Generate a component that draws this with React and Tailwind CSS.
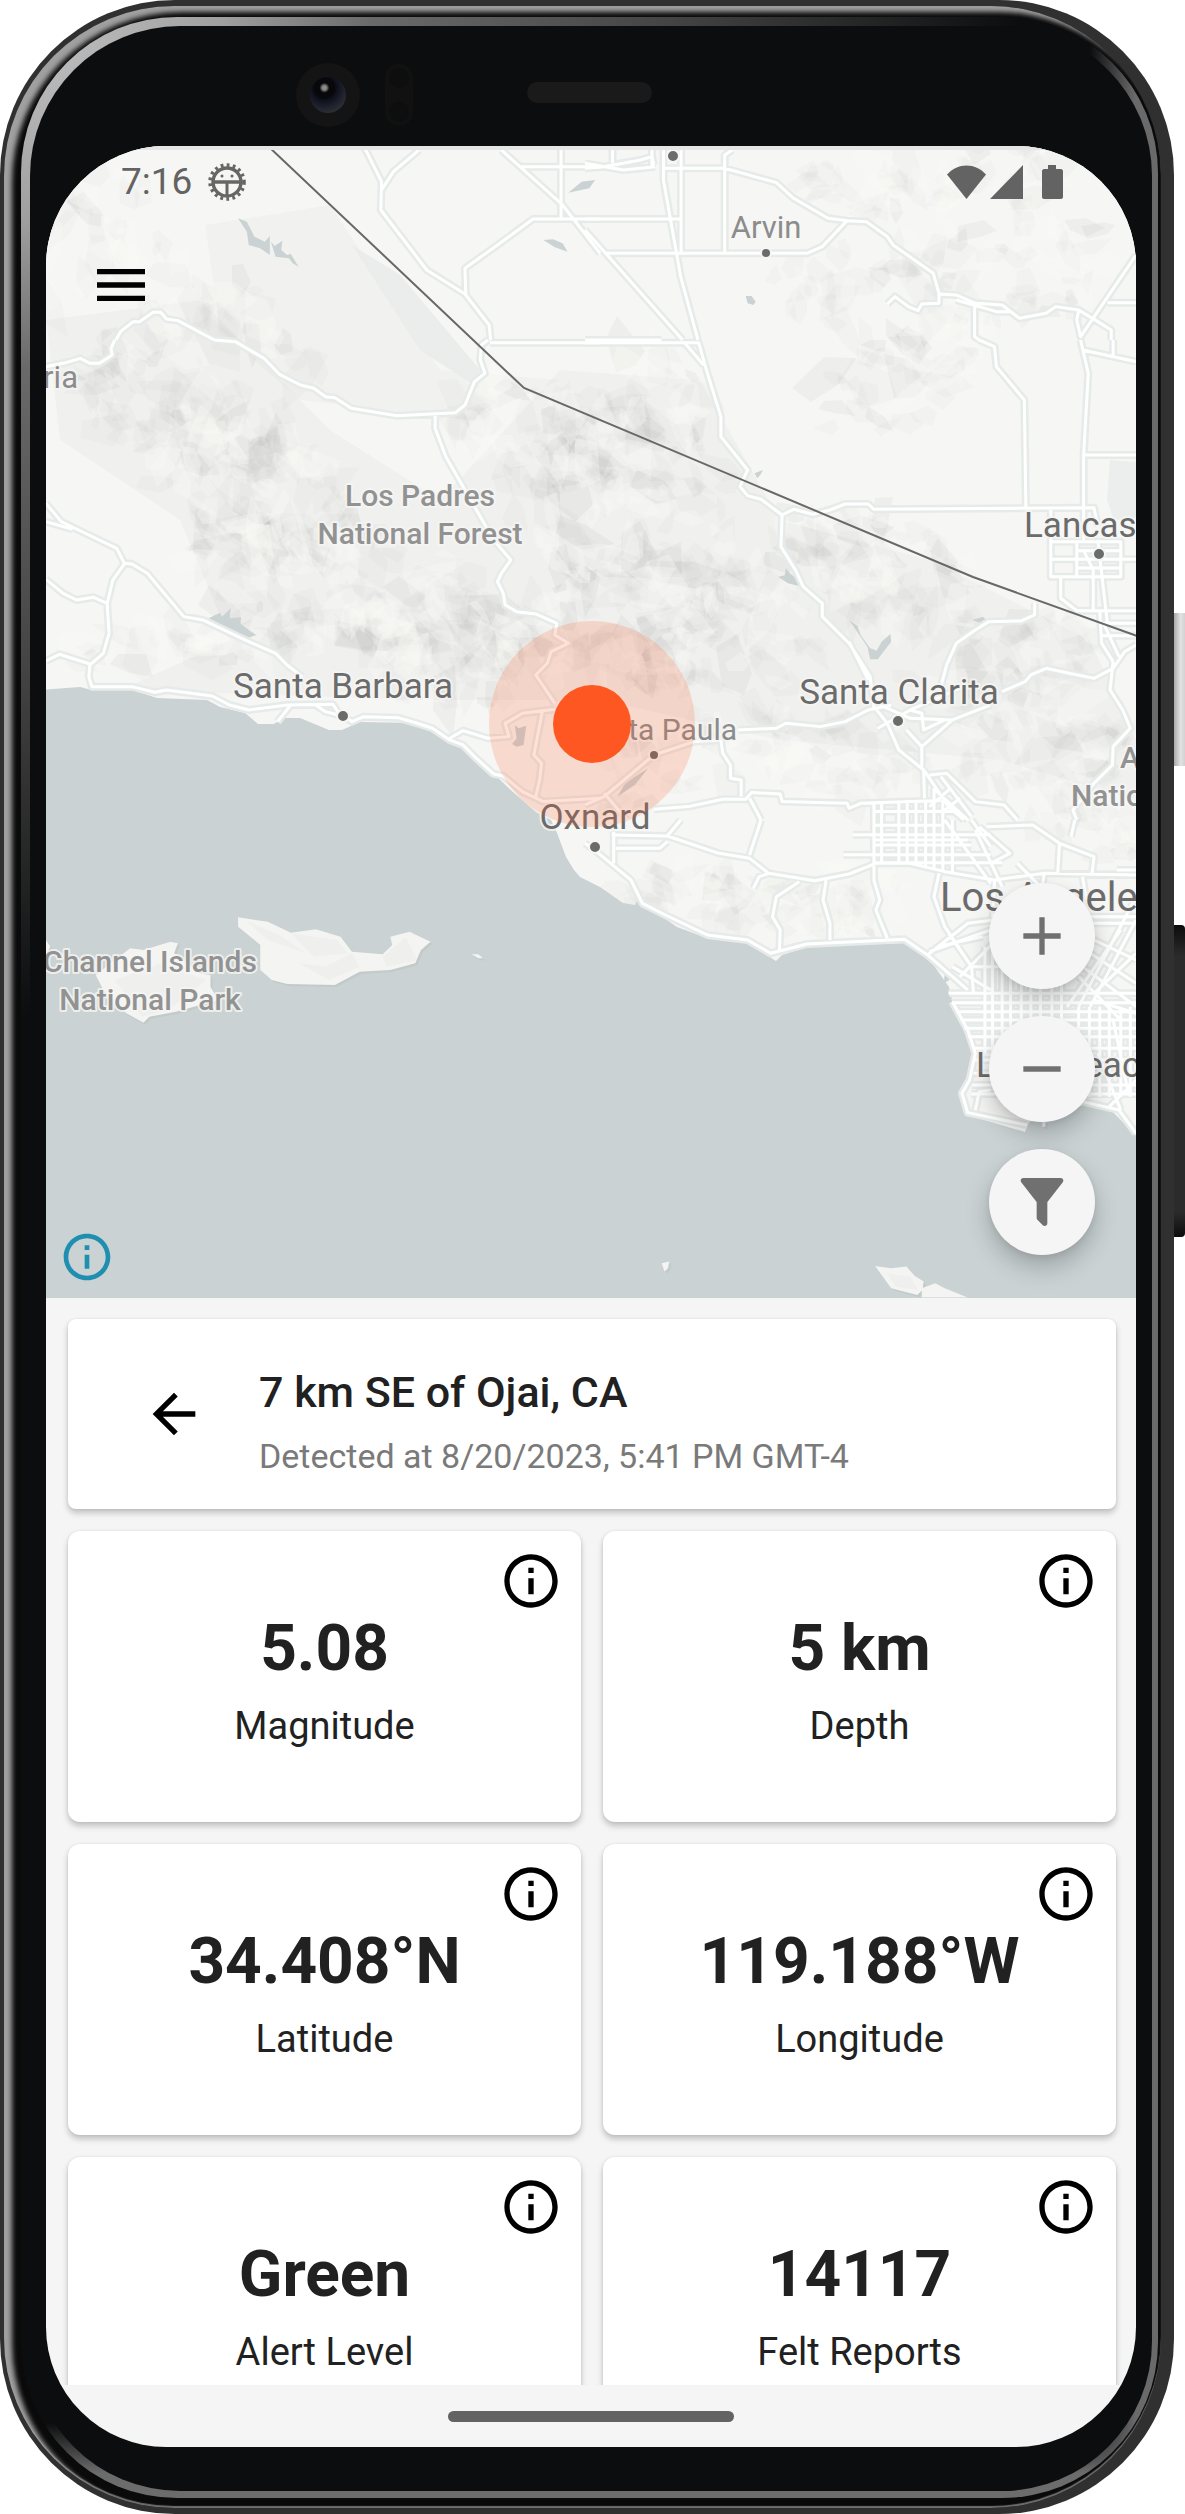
import React from 'react';
import { MdMenu, MdArrowBack, MdOutlineInfo } from 'react-icons/md';

/* ---------- map data ---------- */

const TILES = [
  {
    at: [0, 0],
    roads:
      'M950 440L960 460 997 545 995 630 1115 810 1215 882 1278 975 1282 1020M1095 450L1028 515 997 570M1310 450L1470 615 1568 760M1466 450V655M1360 500H1568M1568 657H1393L1300 735 1215 805 1217 885M303 1020L315 995 348 965 365 965 400 937 420 937 435 957 465 962 560 1020',
    lakes:
      'M622 655L645 665 665 710 692 725 705 708V765L680 745 650 735 645 695ZM708 725L718 738 738 722 735 750 750 765 760 762 780 800 765 790 755 775 720 770ZM1420 720L1445 718 1470 730 1483 755 1450 742ZM1485 578L1520 545 1555 540 1540 565Z',
  },
  {
    at: [585, 0],
    roads:
      'M0 505L50 500 145 480 175 470 180 495M0 490L100 510 183 500M175 450V500M72 450V490M205 450V540L250 830 295 1020M251 450V760M205 505H365L500 548 545 595 635 655 685 662 735 665 790 710 805 735 910 820 925 880 925 910 880 912 870 932 845 920 810 890 790 912M365 755V465L385 450M0 657H251M50 760H580L620 740 685 662M0 690L255 1020M925 882L970 885 1020 910 1090 915 1135 955 1205 940 1230 920 1290 930 1340 965 1375 990V1020M1440 765L1295 1010 1285 960 1290 930M1365 908H1440M1018 915V1010L1030 1020M970 900L1075 935 1115 935M0 1020H200',
    lakes: 'M420 888L435 888 446 905 440 915 425 910Z',
  },
  {
    at: [0, 340],
    roads:
      'M120 80L165 70 210 55 235 70 260 70 293 45 290 25 300 0M560 0L615 5 690 55 730 103 785 135 820 145 850 170 875 173 918 205 1037 227 1190 218 1215 195 1240 125 1267 100 1255 60 1258 15 1275 0M1280 8H1568M1137 227V265L1165 350 1290 600 1335 660 1310 700 1300 725 1315 760 1320 795 1350 815 1400 822 1455 850 1450 885 1485 910 1440 935 1430 970 1400 1005 1450 1090M120 490L160 545 205 570 305 625 325 670 345 672 385 700 480 830 530 840 640 900 720 940 750 975 790 1010M120 545L190 568M325 672L295 720 280 790 285 880 270 940 235 975 232 1010 240 1040H345L405 1057 435 1050 555 1068 600 1095 650 1110 750 1095 870 1093 885 1120 920 1145 950 1130 1040 1133 1090 1150 1130 1165 1175 1200 1210 1215 1240 1250 1290 1302 1315 1308 1365 1355 1420 1385 1568 1375M120 718L165 760 200 780 245 772 280 790M120 963L155 943 235 972M760 1095L725 1145M825 1095L850 1115 885 1125M1175 1195L1210 1172 1275 1195 1330 1190 1320 1150 1365 1120 1450 1108M1417 1115L1395 1245 1415 1270 1410 1320 1400 1370',
    lakes:
      'M545 835L575 818 580 830 603 805 600 835 630 832 628 850 650 870 670 885 650 893 590 865ZM1345 1155L1355 1165 1375 1157 1368 1215 1350 1220 1338 1212 1350 1195Z',
  },
  {
    at: [585, 340],
    roads:
      'M0 8H297L320 100 355 230 355 290 425 390 405 440 425 467 460 478 515 525 512 620 550 690 570 740 620 790 620 830 690 910 745 1010 755 1100 790 1150 820 1230 885 1290M260 8L310 75M690 905L740 1020M515 525L545 508 595 523 640 510 680 492 740 492 755 508 1330 503 1340 560M1030 0L1070 20 1075 80 1148 180 1152 500M1295 0L1315 100 1303 345 1303 600M1303 345H1440M1300 30L1440 65M1380 0V45M1217 510V710H1400V605H1217M1217 658H1440M1285 605V710M1285 632H1400M1285 684H1400M1340 600L1365 850M1243 710V775L1285 812H1440M1328 690V812M1345 812L1350 910 1380 965M1303 632L1328 690M1345 850H1440M1345 887H1440M1355 850L1395 950M1440 915L1410 935 1380 985 1330 1015 1265 1000 1205 985 1165 1005 1150 1025 1090 1055M1380 965L1372 1050 1405 1110 1425 1165 1380 1220 1378 1275 1330 1330 1275 1410 1285 1440M1175 790V825L1140 843 1055 845 1020 870 970 910 945 975 930 1040M400 1170L500 1165 525 1150 615 1160 680 1145 740 1110 800 1095M355 1200L360 1240 380 1275 380 1315 408 1320 408 1370M0 1395L50 1370 180 1245 285 1205 355 1200M50 1360L110 1440M180 1408L270 1400 360 1378 420 1378 435 1358 510 1362 515 1385 685 1390 690 1405 720 1390 930 1382M430 1375L460 1440M885 1290L887 1375M885 1290L950 1400 990 1440M900 1305L945 1300 1020 1385 1095 1395 1130 1440M840 1170L880 1220 880 1285M880 1220L960 1140 1060 1095M765 1165L850 1110 880 1120 885 1170 940 1140M770 1095L850 1135 960 1140M930 1310L1010 1430M910 1345L1000 1440M955 1345L900 1400M980 1375L930 1420M850 1110L990 1040M755 1385V1440M775 1385V1440M820 1385V1440M842 1385V1440M865 1385V1440M890 1385V1440M912 1345V1440M935 1380V1440M755 1415H980',
    lakes:
      'M690 840L712 858 720 885 745 925 762 932 775 905 798 882 800 905 780 935 765 958 745 958 738 920ZM505 710L522 706 525 685 535 700 552 715 560 738 530 730ZM443 400L465 390 458 405 450 415ZM1012 840L1040 830 1048 840 1035 850ZM85 1370L105 1330 165 1285 130 1335Z',
  },
  {
    at: [585, 820],
    roads:
      'M70 45L215 48 350 100 430 115 480 160 600 182 690 162 760 130 850 130 940 155 1070 180 1200 160 1440 165M430 105L460 0M215 48L250 0M75 35V130M80 85H195L215 65M0 70L30 95 120 180 150 250 210 285 320 345 425 360 485 400 580 372 835 358 895 405 1000 510M440 205L455 170 480 160M560 185L500 230 490 290 510 330 508 390M630 180L622 240 640 310 640 360M755 130V180L770 240 760 270 790 355M925 160L912 230 940 320 1010 440 1015 520M895 405L1000 310 1070 300M900 395L1060 330M920 380L1040 350M950 340L1010 440M960 545L1000 630 1020 700 1005 780 985 820 1000 878 1155 915M1440 940L1395 870 1300 845M1020 870L1030 815 1060 810M1050 20L1170 15 1240 70 1330 110 1325 160M1020 30L1090 200M1240 70L1235 165M1280 0L1270 50M940 0L1060 190M700 44H1060M675 104H1060M755 0V130M775 0V128M820 0V125M842 0V125M865 0V130M890 0V140M912 0V145M935 0V150M960 0V155M755 75H1010M755 128H1090M1060 130L1110 100 1030 20M1010 0L1060 80M1070 180L1065 300M1130 130L1190 200M1300 170L1310 240M755 16H930M755 60H1000M1200 160L1195 200M1390 150H1440',
    lakes: 'M940 455L955 462 952 480 938 490Z',
  },
];

const CITY_GRID = [
  ...[1045, 1065, 1090, 1112, 1140, 1165, 1190, 1220, 1245].map((x) => `M${x} 380V700`),
  ...[1290, 1318, 1345, 1370, 1400, 1425].map((x) => `M${x} 560V830`),
  ...[520, 548, 575, 600, 625, 650, 685, 720, 760, 795, 822].map((y) => `M950 ${y}H1440`),
  'M960 440L1060 510M980 470L1100 330M1010 440H1100M1290 560L1440 230M1320 560L1440 300M1330 520L1440 400M1260 560L1400 330M1320 290H1440M1320 310H1440M1330 360L1440 420M1320 400L1440 490M1300 440L1440 560M1290 470L1400 600M1380 600L1420 820M1340 700L1400 870M1330 540L1440 580M1370 860L1440 780',
].join('');

const ISLANDS = [
  {
    at: [0, 820],
    d: 'M622 292L700 305 760 338 825 328 890 350 920 395 1000 403 1025 375 1020 350 1070 335 1125 365 1100 390 1085 430 1020 450 940 455 875 495 750 492 710 480 680 450 680 375 622 320ZM340 385L375 390 445 365 465 370 455 400 520 460 550 465V500L570 540 460 575 390 590 375 608 330 580 270 510 250 465ZM120 360L132 380 120 400ZM1232 403H1250L1262 415H1250ZM1283 417H1293Z',
    shade: 'M640 300L730 345 800 400 700 360ZM760 340L880 360 910 400 820 410ZM780 430L850 440 920 400 940 440 860 480ZM1000 410L1060 350 1090 420 1010 440ZM300 480L420 430 540 480 440 570 370 590Z',
  },
  {
    at: [585, 820],
    d: 'M758 1338L800 1345 840 1340 862 1368 885 1385 882 1410 868 1425 800 1405ZM880 1405L915 1390 940 1405 1000 1433H880ZM200 1330L220 1325 217 1345 208 1355ZM1195 905H1203V920H1195Z',
    shade: 'M790 1360L850 1370 870 1410 810 1400Z',
  },
];

const SEA =
  'M40 690L80 687 92 690 132 690 157 698 207 700 220 707 245 713 258 724 274 724 283 718 300 718 329 730 342 730 360 722 415 723 440 733 459 745 497 777 513 792 536 812 551 820 557 833 566 857 574 870 580 877 600 887 623 903 635 905 639 898 648 907 677 927 707 938 748 943 776 961 782 955 807 947 905 943 928 957 949 987 954 1007 968 1033 974 1050 973 1077 962 1090 968 1115 1025 1132 1029 1122 1083 1105 1109 1108 1140 1140V1300H40Z';

// Mountain areas: centre, radii, tilt in degrees, number of facets.
const RANGES = [
  [90, 240, 70, 80, 40, 36],
  [230, 340, 110, 60, 40, 40],
  [160, 420, 110, 60, 35, 60],
  [250, 480, 130, 60, 35, 100],
  [340, 580, 160, 60, 15, 110],
  [200, 640, 130, 28, -5, 40],
  [450, 650, 110, 50, 10, 80],
  [540, 450, 100, 60, 30, 60],
  [620, 500, 120, 90, 20, 90],
  [640, 620, 130, 70, 10, 110],
  [740, 650, 80, 90, 20, 50],
  [650, 400, 70, 50, 20, 30],
  [880, 300, 110, 50, 10, 40],
  [900, 380, 100, 45, -20, 40],
  [1000, 230, 120, 90, 20, 80],
  [880, 190, 80, 30, 5, 24],
  [880, 570, 110, 50, 20, 80],
  [1000, 660, 100, 45, -15, 50],
  [820, 760, 120, 40, 5, 40],
  [1030, 740, 100, 60, 5, 60],
  [730, 900, 120, 34, 8, 44],
  [850, 900, 60, 34, 8, 20],
  [1090, 830, 60, 30, 10, 26],
  [640, 780, 60, 50, 10, 20],
];

function makeFacets() {
  let seed = 71;
  const rnd = () => {
    seed = (seed * 16807) % 2147483647;
    return seed / 2147483647;
  };
  const light = [];
  const mid = [];
  const dark = [];
  RANGES.forEach(([cx, cy, rx, ry, tilt, n]) => {
    const t = (tilt * Math.PI) / 180;
    for (let i = 0; i < n; i += 1) {
      const a = rnd() * Math.PI * 2;
      const r = Math.sqrt(rnd());
      const u = Math.cos(a) * r * rx;
      const v = Math.sin(a) * r * ry;
      const x = cx + u * Math.cos(t) - v * Math.sin(t);
      const y = cy + u * Math.sin(t) + v * Math.cos(t);
      const size = 7 + rnd() * 20;
      const turn = t + (rnd() - 0.3) * 2.4;
      const pts = [];
      for (let k = 0; k < 5; k += 1) {
        const b = (k / 5) * Math.PI * 2;
        const s = size * (0.4 + rnd() * 0.9);
        const px = Math.cos(b) * s * 1.3;
        const py = Math.sin(b) * s * 0.7;
        pts.push(
          `${Math.round(x + px * Math.cos(turn) - py * Math.sin(turn))} ${Math.round(
            y + px * Math.sin(turn) + py * Math.cos(turn),
          )}`,
        );
      }
      const d = `M${pts.join('L')}Z`;
      const pick = rnd();
      if (pick < 0.25) light.push(d);
      else if (pick < 0.9) mid.push(d);
      else dark.push(d);
    }
  });
  return { light, mid, dark };
}

const FACETS = makeFacets();

const tileTransform = ([x, y]) => `translate(${x} ${y}) scale(0.3827 0.3333)`;

function Label({ x, y, size = 35, anchor = 'middle', tone = '#6b6b6b', weight = 400, children }) {
  return (
    <text
      x={x}
      y={y}
      fontSize={size}
      fontWeight={weight}
      textAnchor={anchor}
      fill={tone}
      stroke="#f6f6f4"
      strokeOpacity="0.8"
      strokeWidth="4"
      strokeLinejoin="round"
      paintOrder="stroke"
    >
      {children}
    </text>
  );
}

function MapDrawing() {
  return (
    <svg
      className="absolute inset-0 h-full w-full font-[Roboto,sans-serif]"
      viewBox="46 146 1090 1152"
      preserveAspectRatio="xMidYMid slice"
      role="img"
      aria-label="Map of the area around Ojai, California"
    >
      <rect x="0" y="100" width="1200" height="1250" fill="#f6f6f4" />
      <g fill="#000000">
        <path fillOpacity="0.018" d="M205 225L330 205 440 370 560 380 470 420 300 400 220 330Z" />
        <path
          fillOpacity="0.022"
          d="M46 320L200 300 330 430 440 500 560 370 700 380 780 520 930 560 1090 640 1136 740 1136 800 1000 760 780 740 600 700 420 700 120 690 230 640 180 520 60 440Z"
        />
        {FACETS.mid.map((d, i) => (
          <path key={i} d={d} fillOpacity="0.014" />
        ))}
        {FACETS.dark.map((d, i) => (
          <path key={i} d={d} fillOpacity="0.03" />
        ))}
      </g>
      <g fill="#f8f8f7" fillOpacity="0.35">
        {FACETS.light.map((d, i) => (
          <path key={i} d={d} />
        ))}
      </g>
      <path d="M352 245L400 275 480 370 478 388 420 350Z" fill="#eaedec" />
      <path d="M1110 460L1136 462V518L1114 520 1107 500Z" fill="#ebeeed" />
      <path d={SEA} fill="#cad2d3" />

      {ISLANDS.map((g) => (
        <g key={g.at.join()} transform={tileTransform(g.at)}>
          <path d={g.d} fill="#b9c1c2" fillOpacity="0.5" transform="translate(5 6)" />
          <path d={g.d} fill="#f4f4f2" />
          <path d={g.shade} fill="#efefee" />
        </g>
      ))}

      {TILES.map((t) => (
        <g key={t.at.join()} transform={tileTransform(t.at)}>
          <path d={t.lakes} fill="#cad2d3" />
        </g>
      ))}

      <clipPath id="basin">
        <path d="M895 405L1000 310 1070 200 1440 200V930L1395 870 1300 845 1160 900 1005 875 1020 700 960 545Z" />
      </clipPath>
      {[
        { stroke: '#e6ebea', strokeWidth: 8 },
        { stroke: '#ffffff', strokeWidth: 3 },
      ].map((pen) => (
        <g key={pen.stroke} fill="none" strokeLinejoin="round" {...pen}>
          {TILES.map((t) => (
            <g key={t.at.join()} transform={tileTransform(t.at)}>
              <path d={t.roads} vectorEffect="non-scaling-stroke" />
            </g>
          ))}
          <g transform={tileTransform([585, 820])}>
            <path d={CITY_GRID} clipPath="url(#basin)" vectorEffect="non-scaling-stroke" />
          </g>
        </g>
      ))}

      <path d="M268 146L524 388 973 577 1140 637" fill="none" stroke="#686868" strokeWidth="2" />

      <g fill="#6b6b6b" stroke="#f6f6f4" strokeWidth="2">
        <circle cx="673" cy="156" r="6" />
        <circle cx="766" cy="253" r="5" />
        <circle cx="343" cy="716" r="6" />
        <circle cx="898" cy="721" r="6" />
        <circle cx="1099" cy="554" r="6" />
        <circle cx="654" cy="755" r="5" />
        <circle cx="595" cy="847" r="6" />
      </g>

      <Label x={766} y={238} size={31} tone="#8c8c8c">Arvin</Label>
      <Label x={78} y={388} size={31} anchor="end" tone="#8c8c8c">Santa Maria</Label>
      <Label x={420} y={506} size={30} weight={500} tone="#929292">Los Padres</Label>
      <Label x={420} y={544} size={30} weight={500} tone="#929292">National Forest</Label>
      <Label x={343} y={698}>Santa Barbara</Label>
      <Label x={899} y={704}>Santa Clarita</Label>
      <Label x={1024} y={537} anchor="start">Lancaster</Label>
      <Label x={737} y={740} size={30} anchor="end" tone="#8c8c8c">Santa Paula</Label>
      <Label x={595} y={829}>Oxnard</Label>
      <Label x={1120} y={768} size={30} anchor="start" weight={500} tone="#929292">Angeles</Label>
      <Label x={1071} y={806} size={30} anchor="start" weight={500} tone="#929292">National Forest</Label>
      <Label x={940} y={911} size={40} anchor="start">Los Angeles</Label>
      <Label x={976} y={1077} size={35} anchor="start">Long Beach</Label>
      <Label x={150} y={972} size={30} weight={500} tone="#929292">Channel Islands</Label>
      <Label x={150} y={1010} size={30} weight={500} tone="#929292">National Park</Label>

      <circle cx="592" cy="724" r="103" fill="#ff5722" fillOpacity="0.18" />
      <circle cx="592" cy="724" r="39" fill="#ff5722" />
      <rect x="0" y="146" width="1200" height="4" fill="#e6e4e4" />
    </svg>
  );
}

/* ---------- icons ---------- */

function DebugIcon() {
  return (
    <svg className="size-[38px]" viewBox="0 0 38 38" fill="none" stroke="#666666" aria-hidden="true">
      <circle cx="19" cy="19" r="17" strokeWidth="3.6" strokeDasharray="2.8 3.3" />
      <circle cx="19" cy="19" r="14" strokeWidth="3.4" />
      <path d="M6 19H32" strokeWidth="3.4" />
      <path d="M19 19V32" strokeWidth="3" />
      <g fill="#666666" stroke="none">
        <circle cx="14" cy="13" r="1.5" />
        <circle cx="24" cy="13" r="1.5" />
      </g>
    </svg>
  );
}

function StatusIcons() {
  return (
    <svg className="h-9 w-[118px]" viewBox="0 0 118 36" fill="#636363" role="img" aria-label="Wi-Fi, signal and battery full">
      <path d="M1 10.500C12 -1.500 29 -1.500 40 10.500L20.500 35Z" />
      <path d="M77 1V35H44Z" />
      <path d="M102 1H110V5H115C116 5 117 6 117 7V33C117 34 116 35 115 35H98C97 35 96 34 96 33V7C96 6 97 5 98 5H102Z" />
    </svg>
  );
}

const FAB_ICONS = {
  'Zoom in': 'M19 13H13V19H11V13H5V11H11V5H13V11H19V13Z',
  'Zoom out': 'M19 13H5V11H19V13Z',
  Filter:
    'M14 12V19.88C14.04 20.18 13.94 20.5 13.71 20.71C13.32 21.1 12.69 21.1 12.3 20.71L10.29 18.7C10.06 18.47 9.96 18.16 10 17.87V12H9.97L4.21 4.62C3.87 4.19 3.95 3.56 4.38 3.22C4.57 3.08 4.78 3 5 3H19C19.22 3 19.43 3.08 19.62 3.22C20.05 3.56 20.13 4.19 19.79 4.62L14.03 12H14Z',
};

function Fab({ label }) {
  return (
    <button
      type="button"
      aria-label={label}
      className="flex size-[106px] items-center justify-center rounded-full bg-[#f5f5f5] shadow-[0_12px_24px_rgba(0,0,0,0.22),0_2px_6px_rgba(0,0,0,0.08)]"
    >
      <svg className="size-16" viewBox="0 0 24 24" fill="#707070" aria-hidden="true">
        <path d={FAB_ICONS[label]} />
      </svg>
    </button>
  );
}

/* ---------- screen parts ---------- */

function MapView() {
  return (
    <section className="relative aspect-[1090/1152] overflow-hidden">
      <MapDrawing />
      <div className="relative flex h-full flex-col justify-between">
        <div>
          <div className="flex items-center justify-between pt-4 pr-[72px] pl-[75px]">
            <div className="flex items-center gap-4">
              <span className="text-[37px] leading-10 text-[#636363]">7:16</span>
              <DebugIcon />
            </div>
            <StatusIcons />
          </div>
          <button type="button" aria-label="Menu" className="mt-[51px] ml-[43px] block text-black">
            <MdMenu className="size-16" />
          </button>
        </div>
        <div className="flex items-end justify-between">
          <button type="button" aria-label="Map attribution" className="mb-[13px] ml-[13px] text-[#1e8fb0]">
            <MdOutlineInfo className="size-14" />
          </button>
          <div className="mr-[41px] mb-[43px] flex flex-col gap-[27px]">
            <Fab label="Zoom in" />
            <Fab label="Zoom out" />
            <Fab label="Filter" />
          </div>
        </div>
      </div>
    </section>
  );
}

function StatCard({ value, label }) {
  return (
    <article className="relative flex h-[291px] flex-col items-center rounded-xl bg-white pt-[78px] text-[#212121] shadow-[0_4px_6px_rgba(0,0,0,0.22),0_0_3px_rgba(0,0,0,0.08)]">
      <button type="button" aria-label={`About ${label}`} className="absolute top-[18px] right-[18px] text-black">
        <MdOutlineInfo className="size-16" />
      </button>
      <p className="text-[64px] leading-[80px] font-bold">{value}</p>
      <p className="text-[38px] leading-[74px]">{label}</p>
    </article>
  );
}

const STATS = [
  ['5.08', 'Magnitude'],
  ['5 km', 'Depth'],
  ['34.408°N', 'Latitude'],
  ['119.188°W', 'Longitude'],
  ['Green', 'Alert Level'],
  ['14117', 'Felt Reports'],
];

function Details() {
  return (
    <main className="h-[1087px] overflow-y-auto pt-[21px] pr-5 pl-[22px] [scrollbar-width:none]">
      <header className="flex h-[190px] items-center rounded-lg bg-white pl-[74px] shadow-[0_4px_6px_rgba(0,0,0,0.22),0_0_3px_rgba(0,0,0,0.08)]">
        <button type="button" aria-label="Back" className="mr-[53px] text-black">
          <MdArrowBack className="size-16" />
        </button>
        <div className="pt-5">
          <h1 className="text-[43px] leading-[64px] font-medium text-[#212121]">7 km SE of Ojai, CA</h1>
          <p className="text-[34px] leading-[64px] text-[#7a7a7a]">Detected at 8/20/2023, 5:41 PM GMT-4</p>
        </div>
      </header>
      <div className="mt-[22px] grid grid-cols-2 gap-[22px]">
        {STATS.map(([value, label]) => (
          <StatCard key={label} value={value} label={label} />
        ))}
      </div>
    </main>
  );
}

function TopHardware() {
  return (
    <div className="flex h-[120px] items-center pt-[18px] pl-[250px]" aria-hidden="true">
      <div className="flex size-16 items-center justify-center rounded-full bg-[#141414]">
        <div className="size-9 rounded-full bg-[radial-gradient(circle_at_40%_30%,#8a8a8a_0_2px,#08080a_5px_30%,#10131f_40%,#2b2d36_75%,#1b1c1f_100%)]" />
      </div>
      <div className="ml-[25px] flex h-[62px] w-7 flex-col items-center justify-between rounded-full bg-[#111111] py-1">
        <div className="size-5 rounded-full bg-[#0e0e0e]" />
        <div className="size-5 rounded-full bg-[#0e0e0e]" />
      </div>
      <div className="mb-[6px] ml-[114px] h-[21px] w-[125px] rounded-full bg-[#1a1a1a]" />
    </div>
  );
}

export default function App() {
  return (
    <div className="bg-white font-[Roboto,sans-serif]">
      <div className="relative mr-[11px]">
        <div className="absolute top-[613px] -right-[11px] h-[153px] w-[11px] bg-[linear-gradient(to_right,#a8a8a8,#e2e2e2_60%,#d2d2d2)]" />
        <div className="absolute top-[925px] -right-[11px] h-[312px] w-[11px] rounded-r-sm bg-[linear-gradient(to_bottom,#0c0c0c,#2b2b2b_10%,#2b2b2b_92%,#0c0c0c)]" />
        <div className="rounded-[175px] bg-[#303030] pt-[6px] pr-[13px] pb-[6px] pl-[4px]">
          <div className="rounded-[170px] bg-[#0a0a0b] pt-[11px] pr-[3px] pb-[10px] pl-[17px] shadow-[inset_8px_6px_5px_#a0a0a0,inset_0_-2px_1px_#707070]">
            <div className="rounded-[156px] bg-[#0c0d0e] bg-[radial-gradient(circle_1000px_at_0_0,#c4c4c4_0,#a0a0a0_20%,#6a6a6a_35%,#444444_65%,transparent_100%),linear-gradient(to_right,transparent_94%,#6a6a6a_98%),linear-gradient(to_bottom,transparent_97%,#6c6c6c_99%)] pt-[9px] pr-[6px] pb-[7px] pl-[9px]">
              <div className="rounded-[150px] bg-[#0c0d0e] px-4 pb-[44px]">
                <TopHardware />
                <div className="overflow-hidden rounded-[120px] bg-[#f5f5f5]">
                  <MapView />
                  <Details />
                  <div className="flex h-[62px] items-center justify-center">
                    <div className="h-[11px] w-[286px] rounded-full bg-[#636363]" />
                  </div>
                </div>
              </div>
            </div>
          </div>
        </div>
      </div>
    </div>
  );
}
